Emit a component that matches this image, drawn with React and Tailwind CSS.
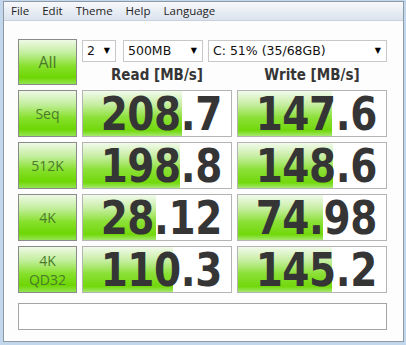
const rows = [
  { label: ["Seq"], read: "208.7", rf: 0.667, write: "147.6", wf: 0.638 },
  { label: ["512K"], read: "198.8", rf: 0.655, write: "148.6", wf: 0.64 },
  { label: ["4K"], read: "28.12", rf: 0.49, write: "74.98", wf: 0.577 },
  { label: ["4K", "QD32"], read: "110.3", rf: 0.607, write: "145.2", wf: 0.637 },
];

const menu = ["File", "Edit", "Theme", "Help", "Language"];

const greenBtn =
  "bg-[linear-gradient(to_bottom,#eef9e6_0%,#c2ee9c_30%,#86e02a_60%,#6dd604_85%,#94e450_100%)]";
const greenBar =
  "bg-[linear-gradient(to_bottom,#f2faec_0%,#c6eea2_30%,#8ae034_60%,#72d80c_88%,#a6e870_100%)]";

const Caret = () => (
  <span className="text-[8px] leading-none text-black">▼</span>
);

const Select = ({ w, children }) => (
  <div
    className={`${w} h-[22px] border border-[#c8c8c8] bg-white flex items-center justify-between pl-[4px] pr-[5px] text-[12.5px] text-[#111] font-['DejaVu_Sans',sans-serif]`}
  >
    <span>{children}</span>
    <Caret />
  </div>
);

const TestButton = ({ lines }) => (
  <div
    className={`w-[59px] h-[47px] border border-[#8a8a8a] ${greenBtn} flex items-center justify-center text-center text-[14px] leading-[19px] text-[#4a7a2a] font-['Open_Sans',sans-serif]`}
  >
    <p>
      {lines.map((l, i) => (
        <span key={l}>
          {i > 0 && <br />}
          {l}
        </span>
      ))}
    </p>
  </div>
);

const Cell = ({ value, frac }) => (
  <div className="relative w-[150px] h-[47px] border border-[#b4b4b4] bg-white">
    <div
      className={`absolute left-0 top-0 bottom-0 ${greenBar}`}
      style={{ width: `${frac * 100}%` }}
    />
    <div className="relative h-full flex items-center justify-end pr-[9px]">
      <span className="inline-block scale-y-[1.2] text-[39px] leading-[34px] font-bold text-[#353535] font-['DejaVu_Sans',sans-serif] tracking-[-0.4px]">
        {value}
      </span>
    </div>
  </div>
);

export default function App() {
  return (
    <div className="w-[406px] h-[345px] bg-[#c3d7ec] pl-[3px] pt-[1px] pr-[2px] pb-[3px] overflow-hidden">
      <div className="w-[401px] h-[341px] border border-[#8e99a6] bg-[#fdfdfd] flex flex-col">
        <div className="h-[19px] bg-[linear-gradient(to_bottom,#f6f8fb,#dbe3ee)] border-b border-[#c9d1dc] flex items-center gap-[13px] pl-[7px] text-[11.5px] text-[#1e1e1e] font-['Open_Sans',sans-serif]">
          {menu.map((m) => (
            <span key={m}>{m}</span>
          ))}
        </div>
        <div className="pl-[14px] pt-[18px] flex flex-col">
          <div className="flex gap-[5px]">
            <div
              className={`w-[59px] h-[46px] border border-[#8a8a8a] ${greenBtn} flex items-center justify-center text-[16px] text-[#4a7a2a] font-['Open_Sans',sans-serif]`}
            >
              All
            </div>
            <div className="flex flex-col">
              <div className="flex mt-[1px]">
                <Select w="w-[34px]">2</Select>
                <div className="w-[7px]" />
                <Select w="w-[80px]">500MB</Select>
                <div className="w-[5px]" />
                <Select w="w-[179px]">C: 51% (35/68GB)</Select>
              </div>
              <div className="flex gap-[5px] mt-[4px] text-[13.5px] leading-[17px] font-bold text-[#353535] font-['DejaVu_Sans',sans-serif]">
                <div className="w-[150px] text-center">
                  <span className="inline-block scale-y-[1.15]">Read [MB/s]</span>
                </div>
                <div className="w-[150px] text-center">
                  <span className="inline-block scale-y-[1.15]">Write [MB/s]</span>
                </div>
              </div>
            </div>
          </div>
          <div className="flex flex-col gap-[5px] mt-[5px]">
            {rows.map((r) => (
              <div key={r.read} className="flex gap-[5px]">
                <TestButton lines={r.label} />
                <Cell value={r.read} frac={r.rf} />
                <Cell value={r.write} frac={r.wf} />
              </div>
            ))}
          </div>
          <div className="mt-[10px] w-[369px] h-[27px] border border-[#a4a4a4] bg-white" />
        </div>
      </div>
    </div>
  );
}
